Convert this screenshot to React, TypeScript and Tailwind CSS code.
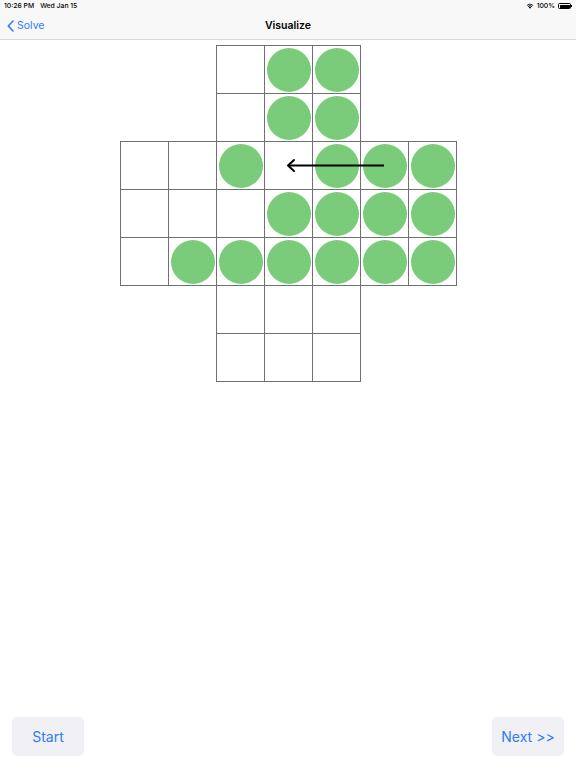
import React from "react";

const layout: string[] = [
  "..EPP..",
  "..EPP..",
  "EEPEPPP",
  "EEEPPPP",
  "EPPPPPP",
  "..EEE..",
  "..EEE..",
];

export default function App() {
  return (
    <div
      className="relative w-[576px] h-[768px] bg-white overflow-hidden"
      style={{ fontFamily: "Inter, 'Liberation Sans', Arial, sans-serif" }}
    >
      {/* header */}
      <div className="bg-[#f8f8f8] border-b border-[#d8d8d8] h-[40px] flex flex-col">
        <div className="h-[12px] flex items-center justify-between px-[4px] text-[6.8px] font-medium text-black">
          <div className="flex gap-[6px]">
            <span>10:26 PM</span>
            <span>Wed Jan 15</span>
          </div>
          <div className="flex items-center gap-[3px]">
            <svg width="8" height="6" viewBox="0 0 16 12">
              <path d="M8 11.5 L10.5 8.6 A3.8 3.8 0 0 0 5.5 8.6 Z" fill="#000" />
              <path d="M3.7 6.6 A6.5 6.5 0 0 1 12.3 6.6 L11.2 7.8 A5 5 0 0 0 4.8 7.8 Z" fill="#000" />
              <path d="M1.5 4.3 A9.6 9.6 0 0 1 14.5 4.3 L13.4 5.5 A8 8 0 0 0 2.6 5.5 Z" fill="#000" />
            </svg>
            <span>100%</span>
            <div className="flex items-center">
              <div className="w-[13px] h-[6px] rounded-[1.5px] border border-black p-[0.5px]">
                <div className="w-full h-full bg-black rounded-[0.5px]" />
              </div>
              <div className="w-[1px] h-[2px] bg-black" />
            </div>
          </div>
        </div>
        <div className="relative flex-1 flex items-center">
          <div className="flex items-center gap-[3px] pl-[7px] text-[#2f7cf6] text-[10.5px]">
            <svg width="7" height="12" viewBox="0 0 7 12">
              <path d="M6 1 L1.3 6 L6 11" stroke="#2f7cf6" strokeWidth="1.6" fill="none" strokeLinecap="round" strokeLinejoin="round" />
            </svg>
            <span>Solve</span>
          </div>
          <div className="absolute inset-0 flex items-center justify-center text-[10.5px] font-semibold text-black">
            Visualize
          </div>
        </div>
      </div>

      {/* board */}
      <div className="flex justify-center pt-[5px] pl-[1px]">
        <div className="relative grid grid-cols-[repeat(7,48px)] grid-rows-[repeat(7,48px)] w-[337px] h-[337px]">
          {layout.flatMap((row, r) =>
            row.split("").map((c, ci) => (
              <div key={`${r}-${ci}`} className="w-[48px] h-[48px]">
                {c !== "." && (
                  <div className="w-[49px] h-[49px] border border-[#707070] flex items-center justify-center">
                    {c === "P" && <div className="w-[44px] h-[44px] rounded-full bg-[#7acc7a]" />}
                  </div>
                )}
              </div>
            ))
          )}
          <svg className="absolute left-0 top-0" width="337" height="337" viewBox="0 0 337 337">
            <path d="M264 120.5 L168 120.5" stroke="#000" strokeWidth="2" />
            <path d="M174 115 L168 120.5 L174 126" stroke="#000" strokeWidth="2" fill="none" strokeLinecap="round" strokeLinejoin="round" />
          </svg>
        </div>
      </div>

      {/* bottom buttons */}
      <div className="absolute left-0 right-0 bottom-[12px] flex justify-between px-[12px]">
        <button className="w-[72px] h-[39px] rounded-[5px] bg-[#f0f0f5] text-[#2f7cf6] text-[14px]">Start</button>
        <button className="w-[72px] h-[39px] rounded-[5px] bg-[#f0f0f5] text-[#2f7cf6] text-[14px]">Next &gt;&gt;</button>
      </div>
    </div>
  );
}
